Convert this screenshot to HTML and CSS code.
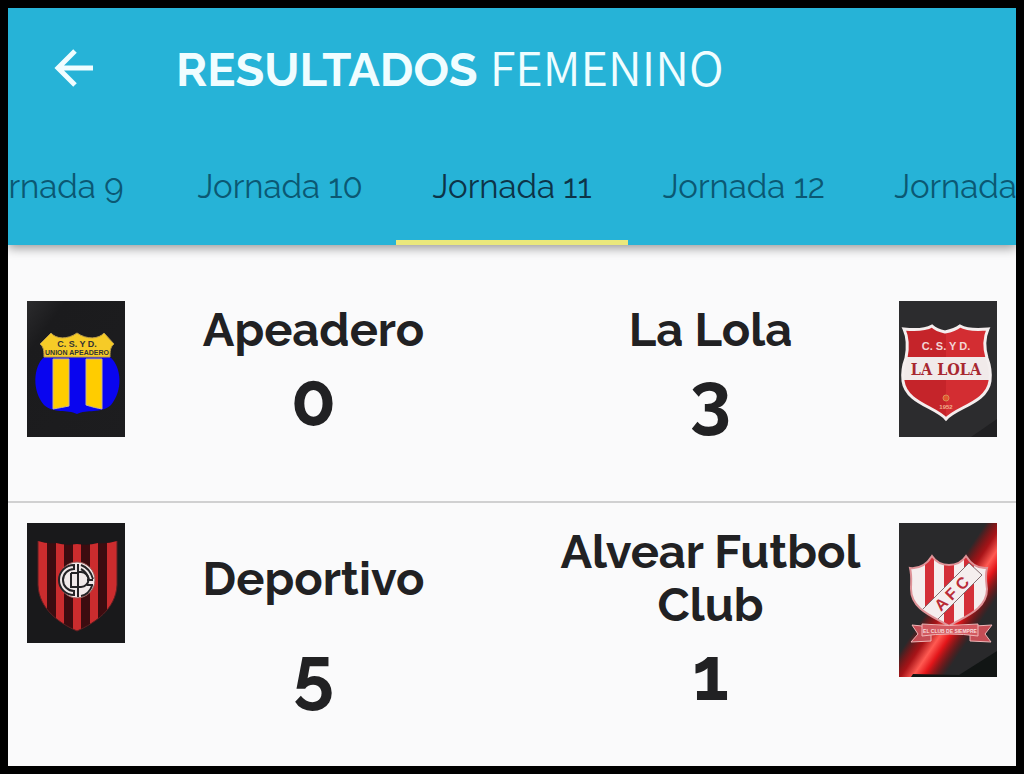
FILE: index.html
```html
<!DOCTYPE html>
<html lang="es">
<head>
    <meta charset="UTF-8">
    <meta name="viewport" content="width=device-width, initial-scale=1">
    <title>Resultados Femenino</title>
    <link rel="stylesheet" href="styles.css">
</head>
<body>

    <!-- header -->
    <header class="header">
        <div class="title-bar">
            <button class="back" type="button" aria-label="Volver">
                <svg viewBox="0 0 40 40"><path d="M39 20H4M21 3L4 20l17 17"/></svg>
            </button>
            <h1 class="title"><b>RESULTADOS</b> <span>FEMENINO</span></h1>
        </div>
        <nav class="tabs">
            <button class="tab" type="button">Jornada 9</button>
            <button class="tab" type="button">Jornada 10</button>
            <button class="tab active" type="button">Jornada 11</button>
            <button class="tab" type="button">Jornada 12</button>
            <button class="tab" type="button">Jornada 13</button>
        </nav>
    </header>

    <!-- results -->
    <main class="results">
        <section class="match">
            <svg class="crest home" viewBox="0 0 98 136">
                <defs>
                    <linearGradient id="dark" x1="0" y1="0" x2="1" y2="1">
                        <stop offset="0" stop-color="#2b2b2d"/>
                        <stop offset=".2" stop-color="#1b1b1d"/>
                        <stop offset="1" stop-color="#1d1d1f"/>
                    </linearGradient>
                </defs>
                <rect width="98" height="136" fill="url(#dark)"/>
                <path d="M17 56C6 66 5 90 17 104c10 9 23 4 33 9 10-5 24 0 34-9 12-14 11-38-1-48z" fill="#0905ef"/>
                <path d="M26 58h16v47c-5 1-10 2-16 3zM59 58h16v50c-5-1-10-2-16-4z" fill="#fc0" stroke="#c9b58c"/>
                <path d="M24 32c5 6 16 7 26 0 10 7 22 6 27 0l10 11c-4 3-4 8-4 13H17c0-5 0-10-4-13z" fill="#f6cb27" stroke="#b89b48"/>
                <text class="crest-text" x="50" y="46" font-size="9" fill="#333">C. S. Y D.</text>
                <text class="crest-text" x="50" y="54" font-size="7" fill="#333">UNION APEADERO</text>
            </svg>
            <h2 class="name home">Apeadero</h2>
            <p class="score home">0</p>
            <h2 class="name away">La Lola</h2>
            <p class="score away">3</p>
            <svg class="crest away" viewBox="0 0 98 136">
                <rect width="98" height="136" fill="#2c2c2e"/>
                <path d="M98 118v18H72z" fill="#202022"/>
                <clipPath id="lola"><path d="M5 28c10 1 21 1 28-3 4 4 8 5 13 6 5-1 10-2 15-6 7 4 17 4 28 3-4 9-4 19-1 29 3 8 4 15 3 23-3 22-34 26-44 38C37 106 7 102 4 80c-1-8 0-15 3-23 2-10 2-20-2-29z"/></clipPath>
                <g clip-path="url(#lola)">
                    <path d="M0 20h98v100H0z" fill="#c5242a"/>
                    <path d="M47 20h51v100H47z" fill="#d32d32"/>
                    <path d="M0 56h98v23H0z" fill="#f1eaea"/>
                </g>
                <path d="M5 28c10 1 21 1 28-3 4 4 8 5 13 6 5-1 10-2 15-6 7 4 17 4 28 3-4 9-4 19-1 29 3 8 4 15 3 23-3 22-34 26-44 38C37 106 7 102 4 80c-1-8 0-15 3-23 2-10 2-20-2-29z" fill="none" stroke="#f4eeee" stroke-width="3"/>
                <text class="crest-text" x="47" y="49" font-size="11" fill="#f3d5d5">C. S. Y D.</text>
                <text class="crest-text slab" x="47" y="74" font-size="16" fill="#a82730">LA LOLA</text>
                <circle cx="47" cy="97" r="3" fill="#e0572e" stroke="#db8b55"/>
                <text class="crest-text" x="47" y="108" font-size="6" fill="#f0b08e">1952</text>
            </svg>
        </section>

        <section class="match">
            <svg class="crest home" viewBox="0 0 98 120">
                <rect width="98" height="120" fill="#19191b"/>
                <clipPath id="depo"><path d="M11 18q9 3 18 2 10 3 21 1 11 2 21-1 9 1 19-2v44c-1 24-22 38-40 46C32 100 12 86 11 62z"/></clipPath>
                <g clip-path="url(#depo)">
                    <path d="M8 15h84v95H8z" fill="#3c0c10"/>
                    <path d="M11 15h9v95h-9zM29 15h8v95h-8zM46 15h8v95h-8zM63 15h8v95h-8zM80 15h10v95H80z" fill="#cb2c2e"/>
                </g>
                <path d="M11 18v44c1 24 21 38 39 46 18-8 39-22 40-46V18" fill="none" stroke="#5d2022"/>
                <circle cx="50" cy="57" r="18" fill="#f1e9e9" stroke="#9c5552"/>
                <g fill="none" stroke="#252326" stroke-width="2">
                    <path d="M47 42a15 15 0 0 0 0 30v-4a11 11 0 0 1 0-22z"/>
                    <path d="M44 50v14h7M44 50h7M51 41v33M51 49h3a7 7 0 0 1 0 15h-3"/>
                    <path d="M54 42c6 2 10 7 12 14M54 46c4 2 6 5 8 10M60 57h6M60 62h6M54 73c6-1 9-5 11-10"/>
                </g>
            </svg>
            <h2 class="name home">Deportivo</h2>
            <p class="score home">5</p>
            <h2 class="name away">Alvear Futbol Club</h2>
            <p class="score away">1</p>
            <svg class="crest away" viewBox="0 0 98 154">
                <defs>
                    <linearGradient id="beam" gradientUnits="userSpaceOnUse" x1="39" y1="72" x2="81" y2="100">
                        <stop offset="0" stop-color="#c00" stop-opacity="0"/>
                        <stop offset=".28" stop-color="#a81418"/>
                        <stop offset=".48" stop-color="#ff5a52"/>
                        <stop offset=".65" stop-color="#e3161a"/>
                        <stop offset="1" stop-color="#900" stop-opacity="0"/>
                    </linearGradient>
                    <clipPath id="alvear"><path d="M11 45c10 1 17-4 22-12 4 6 9 9 17 9s13-3 17-9c5 8 11 13 21 12-2 8-1 13 0 21 0 20-21 27-38 37C33 93 12 86 12 66c0-8 1-13-1-21z"/></clipPath>
                </defs>
                <rect width="98" height="154" fill="#29292b"/>
                <rect width="98" height="154" fill="url(#beam)"/>
                <path d="M98 128v26H12l2-3 46 1z" fill="#111514"/>
                <g clip-path="url(#alvear)">
                    <path d="M8 30h84v75H8z" fill="#f5eeee"/>
                    <path d="M26 30h9v75h-9zM45 30h10v75H45zM65 30h10v75H65z" fill="#d42f38"/>
                    <path d="M22 88L70 40l13 12-49 49z" fill="#f5eeee" stroke="#826c70"/>
                </g>
                <path d="M11 45c10 1 17-4 22-12 4 6 9 9 17 9s13-3 17-9c5 8 11 13 21 12-2 8-1 13 0 21 0 20-21 27-38 37C33 93 12 86 12 66c0-8 1-13-1-21z" fill="none" stroke="#df9398" stroke-width="2"/>
                <text class="crest-text" x="53" y="76" font-size="16" fill="#b92b35" transform="rotate(-45 53 71)">A F C</text>
                <path d="M23 103l-10-1 6 9-7 8 20-1v-7M76 103l17-1-7 9 6 8-21-1v-7" fill="#c54d55" stroke="#efb6b7"/>
                <path d="M23 101q27 3 56 0v12q-29-4-56 0z" fill="#d35960" stroke="#efb6b7"/>
                <text class="crest-text" x="51" y="110" font-size="5" fill="#f8dcdc">EL CLUB DE SIEMPRE</text>
            </svg>
        </section>
    </main>

</body>
</html>
```
FILE: styles.css
```css
/*reset*/
* {
    box-sizing: border-box;
}
h1, h2, p, button {
    margin: 0;
    padding: 0;
}
button {
    border: 0;
    background: none;
    color: inherit;
    font: inherit;
    cursor: pointer;
}
body {
    display: flex;
    flex-direction: column;
    min-height: 100vh;
    margin: 0;
    border: 8px solid #000;
    background-color: #fafafb;
    color: #212123;
    font-family: Raleway, Lato, sans-serif;
}

/*header*/
.header {
    background-color: #26b3d7;
    box-shadow: 0 3px 10px rgba(0,0,0,.4);
    clip-path: inset(0 0 -20px 0);
}
.title-bar {
    display: flex;
    align-items: center;
    height: 120px;
    padding-left: 46px;
    color: #f0fdff;
}
.back {
    width: 40px;
    height: 40px;
    margin-right: 82px;
}
.back svg {
    display: block;
    fill: none;
    stroke: currentColor;
    stroke-width: 5px;
}
.title {
    font-size: 47px;
    line-height: 60px;
    font-weight: 400;
    white-space: nowrap;
}
.title b {
    font-weight: 700;
}
.title span {
    font-family: "Noto Sans CJK SC", sans-serif;
    font-weight: 350;
}

/*tabs*/
.tabs {
    display: flex;
    justify-content: center;
    overflow: hidden;
}
.tab {
    flex: 0 0 23%;
    height: 117px;
    border-top: 5px solid transparent;
    border-bottom: 5px solid transparent;
    color: #0b5873;
    font-size: 33px;
    font-weight: 400;
    white-space: nowrap;
}
.tab.active {
    border-bottom-color: #eae87c;
    color: #0d3448;
}

/*results*/
.results {
    padding-top: 36px;
}
.match {
    display: grid;
    grid-template-columns: 98px 1fr 1fr 98px;
    grid-template-areas:
        "crest1 name1 name2 crest2"
        "crest1 score1 score2 crest2";
    padding: 20px 19px 59px;
}
.match + .match {
    padding-bottom: 20px;
    border-top: 2px solid #d0d0d1;
}
.crest {
    display: block;
    width: 100%;
}
.crest.home {
    grid-area: crest1;
}
.crest.away {
    grid-area: crest2;
}
.crest-text {
    font-family: "Liberation Sans", sans-serif;
    font-weight: 700;
    text-anchor: middle;
}
.crest-text.slab {
    font-family: "DejaVu Serif Condensed", "DejaVu Serif", serif;
}
.name {
    align-self: center;
    padding-top: 2px;
    font-size: 47px;
    line-height: 53px;
    font-weight: 700;
    text-align: center;
}
.name.home {
    grid-area: name1;
}
.name.away {
    grid-area: name2;
}
.score {
    font-size: 74px;
    line-height: 86px;
    font-weight: 700;
    text-align: center;
}
.score.home {
    grid-area: score1;
}
.score.away {
    grid-area: score2;
}
.name.home, .score.home {
    margin-right: 10px;
}
.name.away, .score.away {
    margin-left: 10px;
}
```
